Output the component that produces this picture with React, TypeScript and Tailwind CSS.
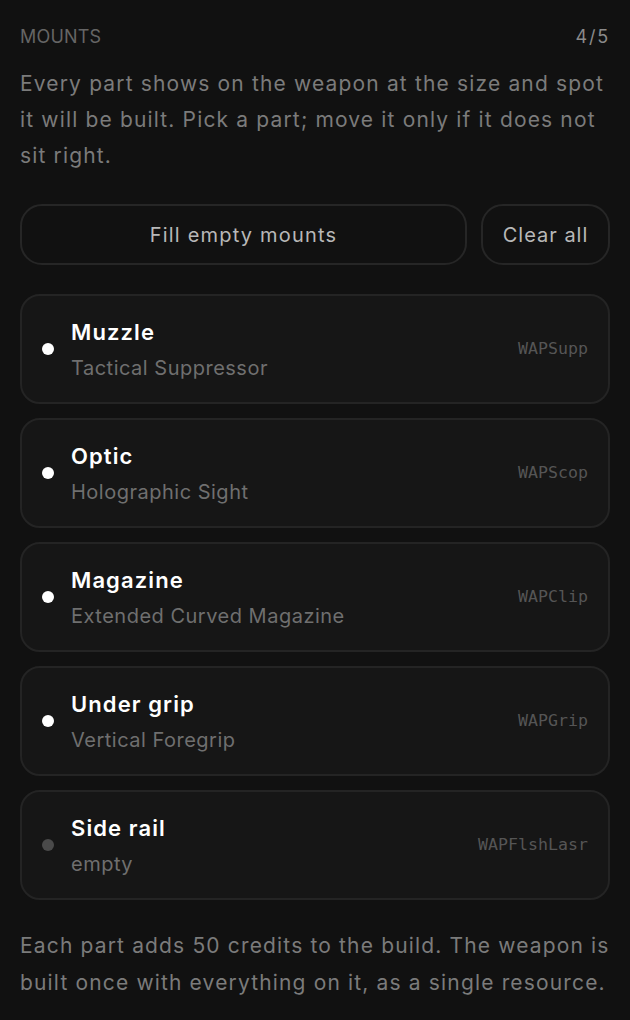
import React from "react";

const items = [
  { title: "Muzzle", sub: "Tactical Suppressor", code: "WAPSupp", filled: true },
  { title: "Optic", sub: "Holographic Sight", code: "WAPScop", filled: true },
  { title: "Magazine", sub: "Extended Curved Magazine", code: "WAPClip", filled: true },
  { title: "Under grip", sub: "Vertical Foregrip", code: "WAPGrip", filled: true },
  { title: "Side rail", sub: "empty", code: "WAPFlshLasr", filled: false },
];

export default function App() {
  return (
    <div
      className="min-h-[1020px] w-[630px] bg-[#111111] px-5 pt-[26px]"
      style={{ fontFamily: "Inter, 'Noto Sans', sans-serif" }}
    >
      <div className="flex items-center justify-between">
        <span className="text-[18px] uppercase tracking-[0.01em] text-[#656565] leading-[22px]">Mounts</span>
        <span className="text-[18px] text-[#8a8a8a] leading-[22px] tracking-[0.1em]">4/5</span>
      </div>
      <p className="mt-[18px] text-[21px] leading-[36px] tracking-[0.055em] text-[#7b7b7b]">
        Every part shows on the weapon at the size and spot it will be built. Pick a part; move it only if it does not sit right.
      </p>
      <div className="mt-[30px] flex gap-[14px]">
        <button className="h-[61px] flex-1 rounded-[22px] border-2 border-[#262626] bg-[#111111] text-[20px] tracking-[0.06em] text-[#b8b8b8]">
          Fill empty mounts
        </button>
        <button className="h-[61px] w-[129px] rounded-[22px] border-2 border-[#262626] bg-[#111111] text-[20px] tracking-[0.05em] text-[#b8b8b8]">
          Clear all
        </button>
      </div>
      <div className="mt-[29px] flex flex-col gap-[14px]">
        {items.map((it) => (
          <div
            key={it.title}
            className="flex h-[110px] items-center rounded-[20px] border-2 border-[#242424] bg-[#161616] pl-[20px] pr-[20px]"
          >
            <span
              className={`h-[12px] w-[12px] rounded-full ${it.filled ? "bg-white" : "bg-[#4a4a4a]"}`}
            />
            <div className="ml-[17px] flex flex-1 flex-col">
              <span className="text-[22px] font-semibold leading-[28px] text-white tracking-[0.05em]">{it.title}</span>
              <span className="mt-[10px] text-[20px] leading-[24px] tracking-[0.025em] text-[#6f6f6f]">{it.sub}</span>
            </div>
            <span
              className="text-[16.6px] text-[#555555]"
              style={{ fontFamily: "'DejaVu Sans Mono', monospace" }}
            >
              {it.code}
            </span>
          </div>
        ))}
      </div>
      <p className="mt-[27px] text-[21px] leading-[37px] tracking-[0.055em] text-[#7b7b7b]">
        Each part adds 50 credits to the build. The weapon is built once with everything on it, as a single resource.
      </p>
    </div>
  );
}
